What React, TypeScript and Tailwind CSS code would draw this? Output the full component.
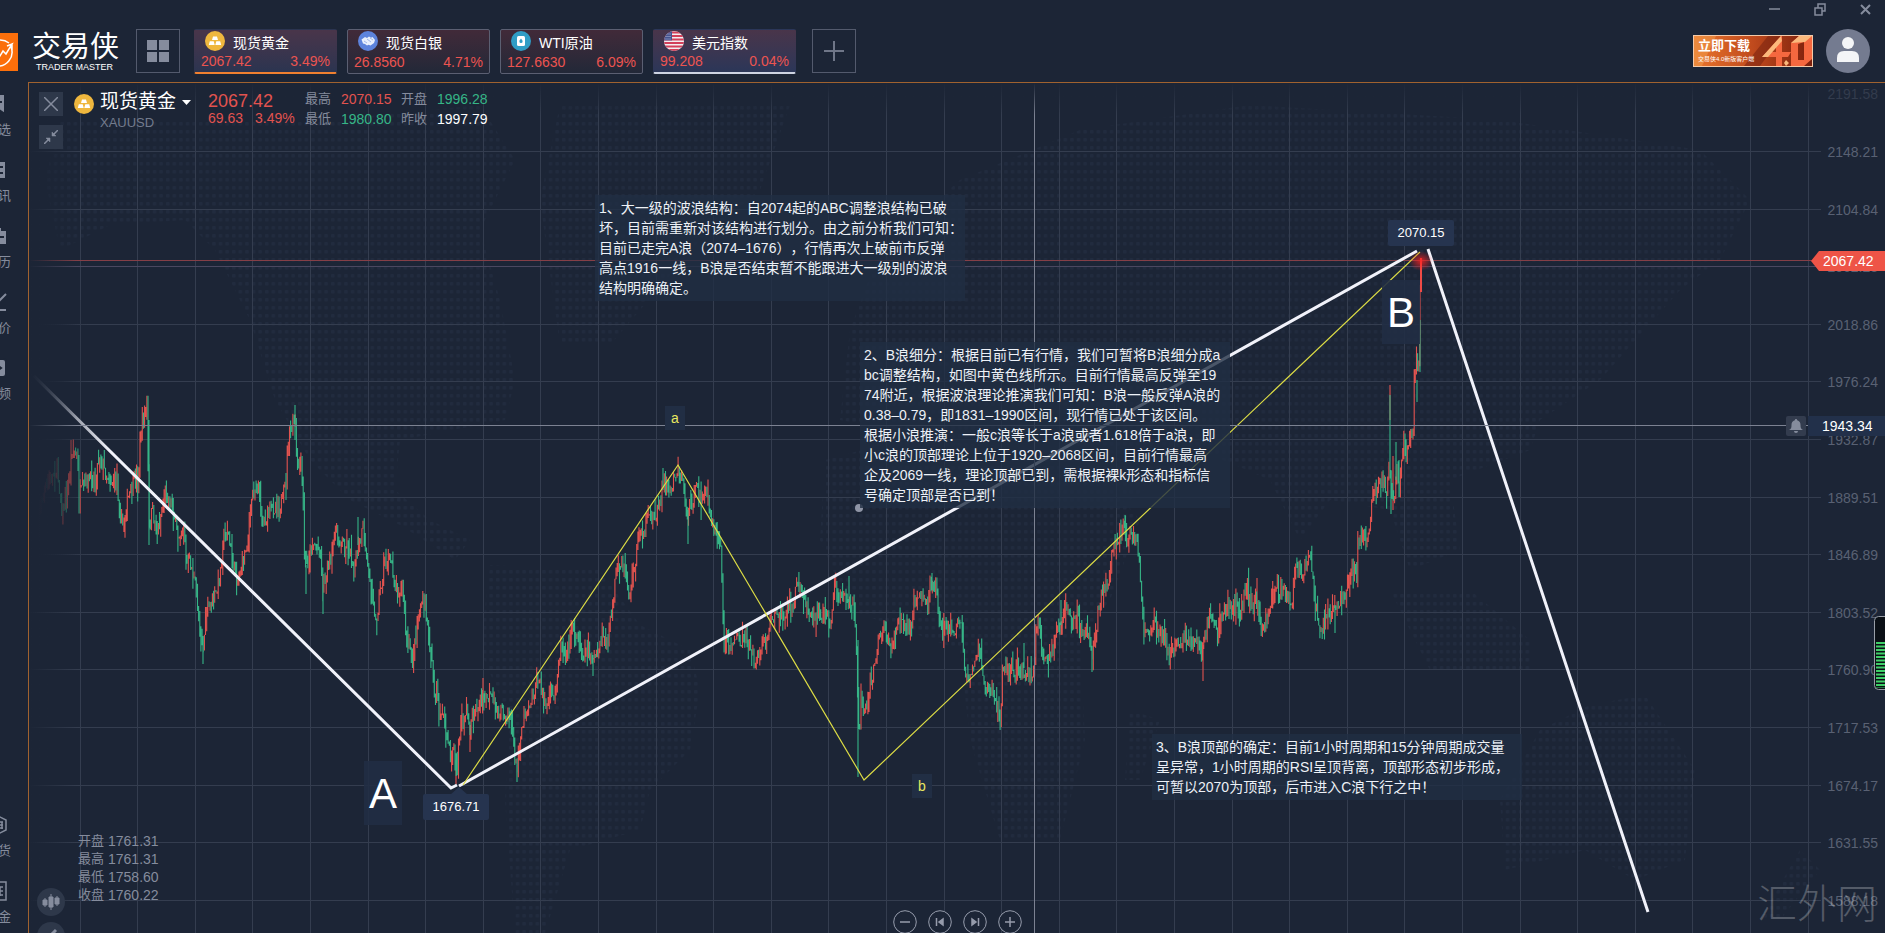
import type { ReactNode } from "react";

interface Quote {
  name: string;
  price: string;
  change: string;
  icon: ReactNode;
  look: string;
}

// Everything on the canvas is plotted in window pixels; the panel itself starts at 29, 83.
const SHIFT = "translate(-29 -83)";
const COLUMNS = Array.from({ length: 31 }, (_, i) => Math.floor(80 + i * 57.6));
const ROWS = [
  { y: 93, label: "2191.58" },
  { y: 151, label: "2148.21" },
  { y: 209, label: "2104.84" },
  { y: 266, label: "2062.23" },
  { y: 324, label: "2018.86" },
  { y: 381, label: "1976.24" },
  { y: 439, label: "1932.87" },
  { y: 497, label: "1889.51" },
  { y: 554, label: "1846.89" },
  { y: 612, label: "1803.52" },
  { y: 669, label: "1760.90" },
  { y: 727, label: "1717.53" },
  { y: 785, label: "1674.17" },
  { y: 842, label: "1631.55" },
  { y: 900, label: "1588.18" },
];

const PRICE_PATH = `33,537 42,497 50,480 57,467 62,510 67,500 72,450 77,457 79,497 87,480 95,477 100,453 105,473 112,483 117,477 119,510 123,527 128,500 134,480 138,483
141,427 145,413 147,405 149,530 152,510 157,533 162,510 166,493 172,503 178,537 184,520 186,565 190,562 195,585 199,620 203,645 207,610 212,600 216,595 220,575 223,540 227,527 229,540 233,565 238,580 245,553
249,530 252,493 258,487 263,523 270,510 282,503 286,480 288,440 295,417 297,470 301,463 303,497 304,547 306,567 313,543 320,550 323,587 328,563 332,563 334,527
340,540 348,547 354,567 358,550 363,530 368,567 373,593 375,627 380,593 385,563 392,563 395,587 403,590 405,627 408,647 413,660 417,627 422,600 427,620 433,670
435,707 437,690 439,723 442,707 447,737 451,760 453,740 457,775 460,730 466,710 470,727 473,713 483,700 490,697 498,710 510,713 513,740 517,775 520,737 524,717
532,697 538,677 547,710 550,690 554,700 558,663 562,643 566,657 573,627 578,640 582,650 590,653 597,660 603,633 608,647 613,597 617,570 625,570 629,597 633,573
638,543 640,527 645,527 650,520 660,507 663,480 671,493 673,477 678,470 683,483 687,517 691,500 697,490 703,500 708,490 711,527 718,537 721,550 723,620 724,647
727,630 729,657 732,640 740,640 747,643 752,650 755,673 760,650 767,637 771,617 780,613 793,607 797,583 802,593 808,607 813,620 822,613 831,620 835,583 839,597
852,603 856,623 857,670 859,740 861,700 864,717 870,683 875,663 878,640 883,630 893,643 898,620 907,633 912,623 914,597 928,603 932,580 937,590 939,620 945,627
957,630 959,613 962,627 964,673 970,683 973,670 978,647 982,663 985,687 992,687 998,710 1001,717 1002,667 1010,670 1020,673 1032,677 1034,670 1036,627 1040,623
1043,660 1047,663 1053,640 1062,627 1066,613 1072,627 1077,617 1082,637 1088,630 1092,657 1096,633 1099,603 1107,583 1110,577 1112,547 1117,543 1125,527 1127,542 1131,530
1137,547 1140,570 1142,607 1144,633 1152,630 1154,617 1158,633 1165,637 1170,660 1177,643 1185,640 1190,647 1195,637 1202,653 1206,630 1210,613 1218,633 1225,607
1237,607 1240,617 1247,583 1251,613 1257,597 1262,630 1270,613 1275,588 1283,590 1292,603 1295,567 1302,570 1309,560 1312,567 1315,603 1320,633 1327,617 1337,610
1343,597 1353,570 1357,583 1358,537 1361,547 1363,520 1365,545 1370,523 1373,490 1382,483 1387,490 1389,467 1392,490 1395,497 1397,467 1399,483 1403,450 1404,427
1406,453 1410,440 1413,427 1414,380 1416,360 1418,378 1419,353 1420,333 1421,275`
  .split(/\s+/)
  .map((pair) => pair.split(",").map(Number));

// Long single wicks: x, top, bottom, rising
const WICKS: [number, number, number, boolean][] = [
  [148, 398, 420, false],
  [149, 420, 545, false],
  [203, 640, 664, false],
  [295, 405, 440, false],
  [323, 585, 614, false],
  [306, 565, 594, false],
  [358, 517, 545, false],
  [456, 760, 784, true],
  [470, 725, 752, true],
  [483, 678, 700, true],
  [517, 765, 782, false],
  [593, 655, 676, false],
  [663, 468, 490, false],
  [688, 510, 544, false],
  [849, 576, 602, false],
  [858, 640, 777, false],
  [932, 573, 590, false],
  [1024, 643, 668, false],
  [1061, 600, 625, false],
  [1092, 650, 672, false],
  [1125, 515, 535, false],
  [1203, 645, 681, true],
  [1257, 578, 600, true],
  [1335, 605, 633, false],
  [1390, 385, 420, true],
  [1390, 395, 470, false],
  [1391, 470, 514, false],
  [1393, 456, 510, true],
  [1396, 442, 480, false],
  [1399, 460, 497, false],
  [1417, 380, 402, false],
  [1420, 320, 372, false],
  [1420, 285, 335, true],
];

function priceAt(x: number) {
  const next = PRICE_PATH.findIndex(([px]) => px >= x);
  if (next <= 0) return PRICE_PATH[0][1];
  const [x1, y1] = PRICE_PATH[next - 1];
  const [x2, y2] = PRICE_PATH[next];
  return y1 + ((y2 - y1) * (x - x1)) / (x2 - x1);
}

function buildCandles() {
  let seed = 7;
  const random = () => {
    seed = (seed * 16807) % 2147483647;
    return seed / 2147483647;
  };
  let up = "";
  let down = "";
  let prev = priceAt(33);
  for (let x = 33; x < 1420; x += 1.15) {
    const close = priceAt(x) + (random() - 0.5) * 15;
    const high = Math.min(prev, close) - random() * random() * 18;
    const low = Math.max(prev, close) + random() * random() * 18;
    const bar = `M${x.toFixed(1)} ${high.toFixed(1)}V${low.toFixed(1)}`;
    if (close < prev) up += bar;
    else down += bar;
    prev = close;
  }
  WICKS.forEach(([x, top, bottom, rising]) => {
    const bar = `M${x} ${top}V${bottom}`;
    if (rising) up += bar;
    else down += bar;
  });
  return { up, down };
}

const candles = buildCandles();

const GoldIcon = () => (
  <svg viewBox="0 0 20 20" className="size-5 shrink-0">
    <circle cx="10" cy="10" r="10" fill="#efb73e" />
    <path d="M8 5.500h4l1 3.600H7zM4.800 10.300h3.900l1 3.600H3.800zM11.300 10.300h3.900l1 3.600h-5.900z" fill="#fff" />
  </svg>
);

const SilverIcon = () => (
  <svg viewBox="0 0 20 20" className="size-5 shrink-0">
    <circle cx="10" cy="10" r="10" fill="#5d83dc" />
    <path d="M3.500 8.500 7 6l2 1 2-1.500 2 1.200 1.500-.7 2.500 3-1 3-3.500 2.500-2-.8-1.500.8-2-1.500-2-.5z" fill="#e9effc" />
    <path d="m6 10 3 2m0-4 4 3m-1-4 3 2" stroke="#8fa8e6" strokeWidth=".8" />
  </svg>
);

const OilIcon = () => (
  <svg viewBox="0 0 20 20" className="size-5 shrink-0">
    <circle cx="10" cy="10" r="10" fill="#2f9dc5" />
    <rect x="6" y="5" width="8" height="10" rx="1.500" fill="#fff" />
    <path d="M10 7.500c1 1.300 1.600 2 1.600 3a1.600 1.600 0 0 1-3.200 0c0-1 .6-1.700 1.600-3z" fill="#2f9dc5" />
  </svg>
);

const FlagIcon = () => (
  <svg viewBox="0 0 20 20" className="size-5 shrink-0">
    <clipPath id="flag">
      <circle cx="10" cy="10" r="10" />
    </clipPath>
    <g clipPath="url(#flag)">
      <rect width="20" height="20" fill="#f3eef1" />
      <path d="M0 1.500h20M0 5h20M0 8.500h20M0 12h20M0 15.500h20M0 19h20" stroke="#d3405a" strokeWidth="1.800" />
      <rect width="8" height="9.400" fill="#46548f" />
      <path d="M1.500 3h6M1.500 5.500h6M1.500 8h6" stroke="#cdd3ea" strokeWidth=".8" strokeDasharray="1 1" />
    </g>
  </svg>
);

const QUOTES: Quote[] = [
  { name: "现货黄金", price: "2067.42", change: "3.49%", icon: <GoldIcon />, look: "border-x border-t border-b-2 border-x-transparent border-t-transparent border-b-[#f08030] bg-linear-to-b from-[#49354a] to-[#2b3450]" },
  { name: "现货白银", price: "26.8560", change: "4.71%", icon: <SilverIcon />, look: "border border-[#5b5f72] bg-linear-to-b from-[#412a39] to-[#222838]" },
  { name: "WTI原油", price: "127.6630", change: "6.09%", icon: <OilIcon />, look: "border border-[#5b5f72] bg-linear-to-b from-[#412a39] to-[#222838]" },
  { name: "美元指数", price: "99.208", change: "0.04%", icon: <FlagIcon />, look: "border-x border-t border-b-2 border-x-transparent border-t-transparent border-b-[#cdd3e2] bg-linear-to-b from-[#49354a] to-[#2b3658]" },
];

const QuoteCard = ({ name, price, change, icon, look }: Quote) => (
  <button className={`flex h-[45px] w-[143px] flex-col justify-between rounded-xs pb-px text-left text-sm leading-5 ${look}`}>
    <span className="flex h-[21px] gap-2 pl-2.5 pt-px text-white">
      {icon}
      <span className="pt-0.5">{name}</span>
    </span>
    <span className="flex w-full justify-between px-1.5 text-[#ec5450]">
      <span>{price}</span>
      <span>{change}</span>
    </span>
  </button>
);

const SIDE_TOP = [
  { label: "自选", text: "选", icon: <path d="M0 0h18v20l-6-4-6 4H0zM8 8h7" /> },
  { label: "资讯", text: "讯", icon: <path d="M0 1h19v18H0zM9 7h7M9 13h7" /> },
  { label: "日历", text: "历", icon: <path d="M0 4h11V1h4v3h5v15H0zM10 11h7" /> },
  { label: "报价", text: "价", icon: <path d="m10 11 9-9M8 18h11" fill="none" stroke="#858c9d" strokeWidth="2" /> },
  { label: "视频", text: "频", icon: <path d="M0 1h16q3 0 3 3v12q0 3-3 3H0zM10 7l4 3-4 3" /> },
];

const SIDE_BOTTOM = [
  { label: "现货", text: "货", icon: <path d="m3 5 8-4 8 4v10l-8 4-8-4zM11 7h5M11 10h5M11 13h5M15 7v7" fill="none" strokeWidth="1.500" stroke="#858c9d" /> },
  { label: "基金", text: "金", icon: <path d="M3 1h16v18H3zM11 6h5M11 10h5M11 14h5M13 6v9" fill="none" strokeWidth="1.500" stroke="#858c9d" /> },
];

const SideItem = ({ label, text, icon }: { label: string; text: string; icon: ReactNode }) => (
  <a href="#" aria-label={label} className="flex h-[66px] flex-col items-end gap-1.5 pr-[17px] text-[13px] leading-5 text-[#858c9d]">
    <svg viewBox="0 0 20 20" className="mr-1 size-5 shrink-0" fill="#858c9d" stroke="#1c2536" strokeWidth="2">
      {icon}
    </svg>
    <span>{text}</span>
  </a>
);

const Header = () => (
  <header className="flex h-[82px] flex-col">
    <div className="flex h-[17px] items-center justify-end gap-8 pr-3 text-[#858c9d]">
      <button aria-label="最小化" className="size-3.5">
        <svg viewBox="0 0 14 14" stroke="currentColor" strokeWidth="1.500"><path d="M2 7h11" /></svg>
      </button>
      <button aria-label="还原" className="size-3.5">
        <svg viewBox="0 0 14 14" fill="none" stroke="currentColor" strokeWidth="1.500"><path d="M2 6h7v7H2zM5 5.500V2h7v7H9.500" /></svg>
      </button>
      <button aria-label="关闭" className="size-3.5">
        <svg viewBox="0 0 14 14" stroke="currentColor" strokeWidth="2"><path d="m2 3 9 9M11 3l-9 9" /></svg>
      </button>
    </div>
    <div className="flex items-start pr-[15px] pt-3">
      <svg viewBox="0 0 18 38" className="mt-1 h-[38px] w-[18px]">
        <rect width="18" height="38" fill="#fb6f0b" />
        <path d="M-4 33A14 14 0 0 0 11 14M0 7a14 14 0 0 1 9 3M-2 26l5-8 3 3 6-10-5 2m5-2v6" fill="none" stroke="#fff" strokeWidth="1.500" />
      </svg>
      <div className="ml-3.5 flex w-[104px] flex-col pt-0.5 text-white">
        <h1 className="text-[29px] leading-8">交易侠</h1>
        <span className="pl-1 text-[9px] leading-2">TRADER MASTER</span>
      </div>
      <button aria-label="面板" className="flex size-11 items-center justify-center border border-[#535a6d]">
        <svg viewBox="0 0 22 22" className="size-[22px]" fill="#858c9d">
          <path d="M0 0h10v10H0zM12 0h10v10H12zM0 12h10v10H0zM12 12h10v10H12z" />
        </svg>
      </button>
      <nav className="ml-3.5 flex gap-2.5">
        {QUOTES.map((quote) => (
          <QuoteCard key={quote.name} {...quote} />
        ))}
      </nav>
      <button aria-label="添加" className="ml-4 flex size-11 items-center justify-center border border-[#535a6d]">
        <svg viewBox="0 0 20 20" className="size-5" stroke="#6f7688" strokeWidth="2"><path d="M0 10h20M10 0v20" /></svg>
      </button>
      <a href="#" className="relative ml-auto mt-1.5 flex h-8 w-[120px] flex-col justify-center overflow-hidden border border-[#f4c9a8] bg-linear-to-r from-[#e8742c] via-[#c04a1d] to-[#7c1f0c] pl-1 text-white">
        <svg viewBox="0 0 118 30" className="absolute inset-0 size-full">
          <path d="M0 0h22L8 30H0z" fill="#f2a04e" opacity=".5" />
          <path d="M74 0h14L66 30H50z" fill="#7b2410" opacity=".6" />
          <path d="M87 0 68 21h14v9h6v-9h6l3-5h-9V0zm-5 9v7h-7zM97 7l8-7h13v23l-8 7H97zm7 1v16h6V6z" fill="#f5683f" />
          <path d="m87 0-19 21h6L88 5zM97 7l8-7h13l-7 6zM92 24l3 3-3 3-2-3z" fill="#fbb97c" />
        </svg>
        <span className="relative text-[13px] font-bold leading-4">立即下载</span>
        <span className="relative text-[6px] leading-2.5">交易侠4.0新版客户端</span>
      </a>
      <button aria-label="账户" className="ml-[13px] size-11">
        <svg viewBox="0 0 44 44">
          <circle cx="22" cy="22" r="22" fill="#747b90" />
          <circle cx="22" cy="14" r="6" fill="#f4f5f7" />
          <path d="M11 33v-4q0-7 7-7h8q7 0 7 7v4z" fill="#f4f5f7" />
        </svg>
      </button>
    </div>
  </header>
);

const WorldMap = () => (
  <g fill="url(#dots)">
    <path d="M60 120H330L480 105 515 160 480 230 500 300 515 380 505 420 400 440 395 490 430 520 470 540 455 560 400 525 350 500 310 460 275 400 250 320 215 250 185 220 110 225 60 250 45 180z" />
    <path d="M560 105 790 105 760 190 700 240 610 345 560 345 540 200z" />
    <path d="M490 565 600 570 640 625 690 650 700 690 690 750 650 790 640 830 570 850 545 933 515 933 505 800 510 720 480 650z" />
    <path d="M825 460 900 440 1080 450 1140 520 1110 600 1080 640 1085 740 1060 840 1000 840 970 740 960 650 850 610 820 540z" />
    <path d="M840 420 850 330 880 250 960 180 1080 130 1250 105 1500 120 1700 150 1750 200 1720 260 1680 290 1600 380 1540 420 1530 450 1450 480 1460 550 1410 570 1390 510 1330 500 1300 540 1270 480 1200 450 1130 500 1060 440 930 440z" />
    <path d="M1390 590h80l60 50v30h-100zM1500 800l40-70 50-25 55-10 50 75-10 90-50 20-50-30-80 20z" />
    <path d="M1800 850l20 20-40 50h-20zM1130 710l30 10-20 60h-15z" />
  </g>
);

const Chart = () => (
  <svg className="absolute inset-0 size-full">
    <defs>
      <pattern id="dots" width="6.600" height="8" patternUnits="userSpaceOnUse">
        <rect x="1" y="2" width="3.500" height="3.500" rx="1" fill="#212b3e" />
      </pattern>
      <radialGradient id="glow">
        <stop offset="0" stopColor="#ff2020" />
        <stop offset="1" stopColor="#ff2020" stopOpacity="0" />
      </radialGradient>
      <linearGradient id="fade">
        <stop offset=".15" stopColor="#1c2536" />
        <stop offset="1" stopColor="#1c2536" stopOpacity="0" />
      </linearGradient>
      <linearGradient id="trend" gradientUnits="userSpaceOnUse" x1="30" x2="110" y1="0" y2="0">
        <stop offset="0" stopColor="#2a3344" />
        <stop offset="1" stopColor="#f1f2fa" />
      </linearGradient>
    </defs>
    <g transform={SHIFT}>
      <WorldMap />
      <g stroke="#343d4f" shapeRendering="crispEdges">
        {COLUMNS.map((x) => (
          <line key={x} x1={x} x2={x} y1="83" y2="200%" />
        ))}
        {ROWS.slice(1).map(({ y }) => (
          <line key={y} x1="29" x2="200%" y1={y} y2={y} stroke={y === 266 ? "#4a4860" : "#343d4f"} />
        ))}
        <line x1="29" x2="200%" y1="260" y2="260" stroke="#853f47" />
      </g>
      <path d={candles.up} stroke="#e2534f" strokeWidth="1.100" />
      <path d={candles.down} stroke="#36b587" strokeWidth="1.100" />
      <path d="M1421 258V292" stroke="#f04b46" strokeWidth="2" />
      <rect x="29" y="300" width="60" height="300" fill="url(#fade)" />
      <path d="M34 376 451 788 457 785" fill="none" stroke="url(#trend)" strokeWidth="3" />
      <path d="M459 786 1417 251M1428 249 1648 912" stroke="#f1f2fa" strokeWidth="3" />
      <path d="M463 785 678 465 864 780 1420 252" fill="none" stroke="#dcdc45" strokeWidth="1.200" />
      <ellipse cx="1421" cy="261" rx="12" ry="10" fill="url(#glow)" opacity=".8" />
      <path d="M450 795l9-8 9 8z" fill="#26344f" />
      <g stroke="#7c8292" shapeRendering="crispEdges">
        <line x1="30" x2="200%" y1="425" y2="425" />
        <line x1="1034" x2="1034" y1="83" y2="200%" />
      </g>
      <circle cx="859" cy="508" r="4" fill="#8f95a6" />
    </g>
  </svg>
);

const PriceAxis = () => (
  <>
    <svg className="absolute right-0 top-0 h-full w-16 bg-[#1c2536]">
      {ROWS.map(({ y, label }) => (
        <text key={label} x="57" y={y - 77} textAnchor="end" className={y === 93 ? "fill-[#333c4d] text-sm" : "fill-[#596173] text-sm"}>
          {label}
        </text>
      ))}
    </svg>
    <div className="absolute right-0 top-[333px] flex h-5 items-center gap-0.5 text-sm text-white">
      <button aria-label="预警" className="flex h-5 w-5 items-center justify-center rounded-xs bg-[#333c4e]">
        <svg viewBox="0 0 16 16" className="size-4" fill="#858c9d">
          <path d="M8 1a1.200 1.200 0 0 1 1.200 1.200C11.500 3 12.500 4.500 12.500 7c0 3 .5 4 2.500 5H1c2-1 2.500-2 2.500-5 0-2.500 1-4 3.300-4.800A1.200 1.200 0 0 1 8 1zM6 13h4a2 2 0 0 1-4 0z" />
        </svg>
      </button>
      <span className="flex h-5 w-[77px] items-center bg-[#22304a] pl-3.5">1943.34</span>
    </div>
    <div className="absolute right-0 top-[168px] flex h-5">
      <svg viewBox="0 0 8 20" className="h-5 w-2"><path d="M8 0 0 10l8 10z" fill="#ee5447" /></svg>
      <span className="flex w-[66px] items-center bg-[#ee5447] pl-1 text-sm text-white">2067.42</span>
    </div>
    <svg className="absolute right-0 top-[533px] h-[74px] w-[11px]">
      <rect x=".5" y=".5" width="16" height="73" rx="4" fill="#0b1016" stroke="#999fa8" />
      <path d="M6.500 26v46" stroke="#3fcf68" strokeWidth="9" strokeDasharray="2 1.500" />
    </svg>
  </>
);

const Note = ({ place, lines }: { place: string; lines: string[] }) => (
  <div className={`absolute w-[370px] bg-[#212e44]/80 px-1 py-[3px] text-sm leading-5 text-[#edf1f7] [text-spacing-trim:space-all] ${place}`}>
    {lines.map((line) => (
      <p key={line} className="whitespace-nowrap">{line}</p>
    ))}
  </div>
);

const Annotations = () => (
  <>
    <Note
      place="left-[566px] top-[112px]"
      lines={[
        "1、大一级的波浪结构：自2074起的ABC调整浪结构已破",
        "坏，目前需重新对该结构进行划分。由之前分析我们可知：",
        "目前已走完A浪（2074–1676），行情再次上破前市反弹",
        "高点1916一线，B浪是否结束暂不能跟进大一级别的波浪",
        "结构明确确定。",
      ]}
    />
    <Note
      place="left-[831px] top-[259px]"
      lines={[
        "2、B浪细分：根据目前已有行情，我们可暂将B浪细分成a",
        "bc调整结构，如图中黄色线所示。目前行情最高反弹至19",
        "74附近，根据波浪理论推演我们可知：B浪一般反弹A浪的",
        "0.38–0.79，即1831–1990区间，现行情已处于该区间。",
        "根据小浪推演：一般c浪等长于a浪或者1.618倍于a浪，即",
        "小c浪的顶部理论上位于1920–2068区间，目前行情最高",
        "企及2069一线，理论顶部已到，需根据裸k形态和指标信",
        "号确定顶部是否已到！",
      ]}
    />
    <Note
      place="left-[1123px] top-[651px]"
      lines={[
        "3、B浪顶部的确定：目前1小时周期和15分钟周期成交量",
        "呈异常，1小时周期的RSI呈顶背离，顶部形态初步形成，",
        "可暂以2070为顶部，后市进入C浪下行之中！",
      ]}
    />
    <span className="absolute left-[335px] top-[678px] flex h-16 w-[38px] items-center justify-center bg-[#212e44]/90 text-[42px] text-white">A</span>
    <span className="absolute left-[1353px] top-[197px] flex h-16 w-[38px] items-center justify-center bg-[#212e44]/90 text-[42px] text-white">B</span>
    <span className="absolute left-[636px] top-[323px] flex h-6 w-5 items-center justify-center bg-[#212e44] text-sm text-[#e8e860]">a</span>
    <span className="absolute left-[883px] top-[691px] flex h-6 w-5 items-center justify-center bg-[#212e44] text-sm text-[#e8e860]">b</span>
    <span className="absolute left-[394px] top-[711px] flex h-[26px] w-[66px] items-center justify-center rounded-xs bg-[#26344f] text-[13px] text-white">1676.71</span>
    <span className="absolute left-[1359px] top-[137px] flex h-[26px] w-[66px] items-center justify-center rounded-xs bg-[#26344f] text-[13px] text-white">2070.15</span>
  </>
);

const ChartHeader = () => (
  <div className="relative flex items-start pl-2.5 pt-[9px]">
    <div className="flex flex-col gap-[9px]">
      <button aria-label="关闭图表" className="flex size-6 items-center justify-center bg-[#2e384a]">
        <svg viewBox="0 0 14 14" className="size-3.5" stroke="#858c9d" strokeWidth="1.500"><path d="m0 0 14 14M14 0 0 14" /></svg>
      </button>
      <button aria-label="收起" className="flex size-6 items-center justify-center bg-[#2e384a]">
        <svg viewBox="0 0 14 14" className="size-3.5" stroke="#858c9d" fill="#858c9d" strokeWidth="1.500">
          <path d="m14 0-5 5M0 14l5-5" />
          <path d="M8 2v4h4zM6 12V8H2z" strokeWidth=".5" />
        </svg>
      </button>
    </div>
    <span className="ml-[11px] mt-0.5"><GoldIcon /></span>
    <div className="ml-1.5 w-[108px]">
      <button className="flex items-center gap-1.5 text-[19px] leading-5 text-white">
        现货黄金
        <svg viewBox="0 0 9 5" className="w-[9px]" fill="#fff"><path d="M0 0h9L4.500 5z" /></svg>
      </button>
      <p className="mt-[3px] text-[13px] leading-4 text-[#737b8d]">XAUUSD</p>
    </div>
    <div className="w-[97px] text-sm leading-4 text-[#e2534f]">
      <p className="text-lg leading-[18px]">2067.42</p>
      <p className="flex gap-3"><span>69.63</span><span>3.49%</span></p>
    </div>
    <dl className="-mt-[3px] grid grid-cols-[26px_50px_26px_50px] items-center gap-x-2.5 text-sm leading-5">
      <dt className="text-[13px] text-[#858c9d]">最高</dt><dd className="text-[#e2534f]">2070.15</dd>
      <dt className="text-[13px] text-[#858c9d]">开盘</dt><dd className="text-[#36b587]">1996.28</dd>
      <dt className="text-[13px] text-[#858c9d]">最低</dt><dd className="text-[#36b587]">1980.80</dd>
      <dt className="text-[13px] text-[#858c9d]">昨收</dt><dd className="text-white">1997.79</dd>
    </dl>
  </div>
);

const CONTROLS = [
  { label: "缩小", icon: <path d="M7 12h10" /> },
  { label: "上一根", icon: <path d="M8.500 8v8M15 9v6l-4-3z" fill="currentColor" /> },
  { label: "下一根", icon: <path d="M15.500 8v8M9 9v6l4-3z" fill="currentColor" /> },
  { label: "放大", icon: <path d="M7 12h10M12 7v10" /> },
];

const ChartFooter = () => (
  <>
    <dl className="absolute bottom-[29px] left-[49px] grid grid-cols-[26px_50px] gap-x-1 text-sm leading-[18px] text-[#858c9d]">
      <dt className="text-[13px]">开盘</dt><dd>1761.31</dd>
      <dt className="text-[13px]">最高</dt><dd>1761.31</dd>
      <dt className="text-[13px]">最低</dt><dd>1758.60</dd>
      <dt className="text-[13px]">收盘</dt><dd>1760.22</dd>
    </dl>
    <div className="absolute -bottom-[17px] left-2 flex flex-col gap-1.5">
      <button aria-label="K线" className="flex size-7 items-center justify-center rounded-full bg-[#2e384a]">
        <svg viewBox="0 0 18 18" className="size-[18px]" stroke="#858c9d" fill="#858c9d">
          <path d="M3 5v9M9 1v16M15 3v10" />
          <path d="M1 7h4v5H1zM7 4h4v10H7zM13 5h4v6h-4z" />
        </svg>
      </button>
      <button aria-label="画线" className="flex size-7 items-center justify-center rounded-full bg-[#2e384a]">
        <svg viewBox="0 0 18 18" className="size-[18px]" stroke="#858c9d" strokeWidth="3"><path d="M3 14 14 3" /></svg>
      </button>
    </div>
    <div className="absolute -bottom-px left-[864px] flex gap-[11px] text-[#969cac]">
      {CONTROLS.map(({ label, icon }) => (
        <button key={label} aria-label={label} className="size-6">
          <svg viewBox="0 0 24 24" fill="none" stroke="currentColor" strokeWidth="1.500">
            <circle cx="12" cy="12" r="11.300" strokeWidth="1" fill="#1c2536" />
            {icon}
          </svg>
        </button>
      ))}
    </div>
    <p className="absolute bottom-1 right-2 text-[40px] font-light leading-[50px] text-white/25">汇外网</p>
  </>
);

const App = () => (
  <div className="flex h-screen flex-col overflow-hidden bg-[#1c2536] font-['Liberation_Sans','Noto_Sans_CJK_SC',sans-serif]">
    <Header />
    <div className="flex min-h-0 flex-1">
      <aside className="flex w-7 shrink-0 flex-col justify-between overflow-hidden pt-3">
        <nav>
          {SIDE_TOP.map((item) => <SideItem key={item.label} {...item} />)}
        </nav>
        <nav className="-mb-3.5">
          {SIDE_BOTTOM.map((item) => <SideItem key={item.label} {...item} />)}
        </nav>
      </aside>
      <main className="relative min-w-0 flex-1 overflow-hidden border-l border-t border-[#a0622f]">
        <Chart />
        <div className="absolute inset-x-0 top-0 h-8 bg-linear-to-b from-[#1c2536] to-transparent" />
        <div className="absolute inset-y-0 left-0 w-12 bg-linear-to-r from-[#1c2536] to-transparent" />
        <Annotations />
        <PriceAxis />
        <ChartHeader />
        <ChartFooter />
      </main>
    </div>
  </div>
);

export default App;
